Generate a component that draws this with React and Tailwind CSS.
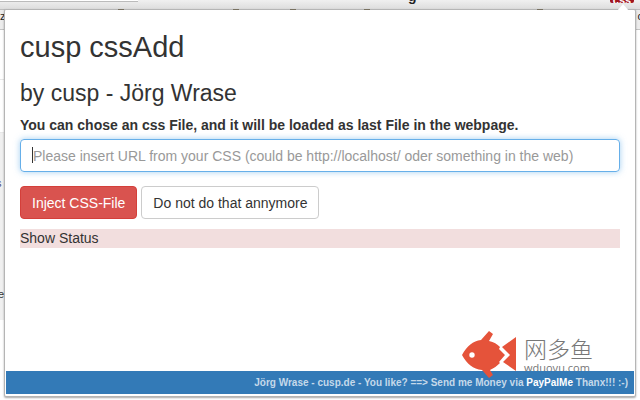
import React from "react";

const Fish = () => (
  <svg viewBox="0 0 54 48" className="h-12 w-[54px] shrink-0" aria-hidden="true">
    <g fill="#e5533a">
      <path d="M0 25 C5 16 11 11 19 10 L27 1 L31 4 L27 11 C32 12 35 14 38 17 L37 19 L43 25 L37 32 L38 33 C35 36 32 38 28 40 L31 45 L27 48 L20 40 C11 39 5 34 0 25 Z" />
      <path d="M40 17 L54 7 V41 L41 32 L48 25 Z" />
    </g>
    <circle cx="10" cy="25" r="2.7" fill="#fff" />
  </svg>
);

const BrowserBar = () => (
  <div className="relative h-[30px] border-b border-[#c4c4c4] bg-[#ececec]">
    <div className="h-2.5 overflow-hidden border-b border-[#bdbdbd] bg-linear-to-b from-[#f0f0f0] to-[#dddddd]">
      <div className="h-[2px] w-[138px] border-b border-[#bbbbbb] bg-white" />
    </div>
    <span className="absolute top-2 left-0 text-[11px] leading-4 text-[#222]">z</span>
    <span className="absolute top-2 right-[-3px] text-[11px] leading-4 text-[#222]">c</span>
    <span className="absolute -top-3 left-[408px] text-sm leading-4 font-bold text-[#222]">g</span>
    <div className="absolute top-0 right-1.5 flex h-[3px] w-6 items-end justify-center overflow-hidden rounded-b-xs bg-[#a0141e] text-[11px] leading-[6px] font-bold text-white">
      css
    </div>
  </div>
);

// visible edge of the page behind the popup
const PageEdge = () => (
  <div className="w-1 overflow-hidden text-[11px] leading-4 text-[#333]">
    <div className="mt-[49px] h-[54px] border-y border-[#e8e8e8]" />
    <div className="h-[187px] bg-[#f0f0f0] pt-[42px]">
      <div className="-ml-1 text-[#4a4a80]">s</div>
      <div className="-ml-0.5 pt-[95px]">e</div>
    </div>
  </div>
);

const tabMarks = ["left-[113px]", "left-[228px]", "left-[285px]", "left-[359px]", "left-[532px]"];

const Popup = () => (
  <div className="relative flex min-h-[388px] flex-col rounded-xs border border-[#b5b5b5] bg-white p-px pb-0.5 shadow-[0_1px_2px_rgba(0,0,0,0.35)]">
    {tabMarks.map((left) => (
      <span key={left} className={`absolute -top-px h-px w-1.5 bg-[#777060] ${left}`} />
    ))}
    <svg viewBox="0 0 12 7" className="absolute -top-1.5 right-1.5 h-[7px] w-3" aria-hidden="true">
      <path d="M0 7 L6 0 L12 7 Z" fill="#fff" />
    </svg>
    <main className="flex-1 px-3.5 pt-5">
      <h1 className="mb-4 text-[29px] leading-8">cusp cssAdd</h1>
      <h2 className="mb-2 text-[23px] leading-7">by cusp - Jörg Wrase</h2>
      <form onSubmit={(e) => e.preventDefault()}>
        <label htmlFor="css-url" className="mb-1 block text-sm leading-5 font-bold">
          You can chose an css File, and it will be loaded as last File in the webpage.
        </label>
        <div className="relative mb-3.5">
          <input
            id="css-url"
            type="text"
            autoFocus
            placeholder="Please insert URL from your CSS (could be http://localhost/ oder something in the web)"
            className="block h-[33px] w-full rounded border border-[#66afe9] px-3 text-sm caret-transparent shadow-[0_0_6px_rgba(102,175,233,0.6)] outline-none placeholder:text-[#999]"
          />
          <span className="absolute top-2 left-3 h-4 w-px bg-[#333]" />
        </div>
        <div className="mb-2.5 flex gap-1">
          <button type="submit" className="h-[33px] rounded border border-[#d43f3a] bg-[#d9534f] px-[11px] text-sm text-white">
            Inject CSS-File
          </button>
          <button type="button" className="h-[33px] rounded border border-[#ccc] bg-white px-[11px] text-sm">
            Do not do that annymore
          </button>
        </div>
      </form>
      <p className="bg-[#f2dede] text-sm leading-[19px]">Show Status</p>
    </main>
    <div className="absolute right-[42px] bottom-[22px] text-[#777]">
      <div className="font-['Noto_Sans_CJK_SC',sans-serif] text-[23px] leading-7 font-light">网多鱼</div>
      <div className="font-['Open_Sans',sans-serif] text-[11px] leading-3">wduoyu.com</div>
    </div>
    <footer className="relative bg-[#337ab7] px-1.5 text-right text-[10px] leading-[23px] font-bold text-[#c5d9ea]">
      Jörg Wrase - cusp.de - You like? ==&gt; Send me Money via{" "}
      <a href="#paypal" className="text-white">PayPalMe</a> Thanx!!! :-)
    </footer>
    <div className="absolute right-[119px] bottom-[18px]">
      <Fish />
    </div>
  </div>
);

export default function App() {
  return (
    <div className="relative min-h-screen bg-white font-['Liberation_Sans',Arial,sans-serif] text-[#333]">
      <div className="absolute inset-x-0 top-0">
        <BrowserBar />
        <PageEdge />
      </div>
      <div className="px-1 pt-[9px] pb-[3px]">
        <Popup />
      </div>
    </div>
  );
}
